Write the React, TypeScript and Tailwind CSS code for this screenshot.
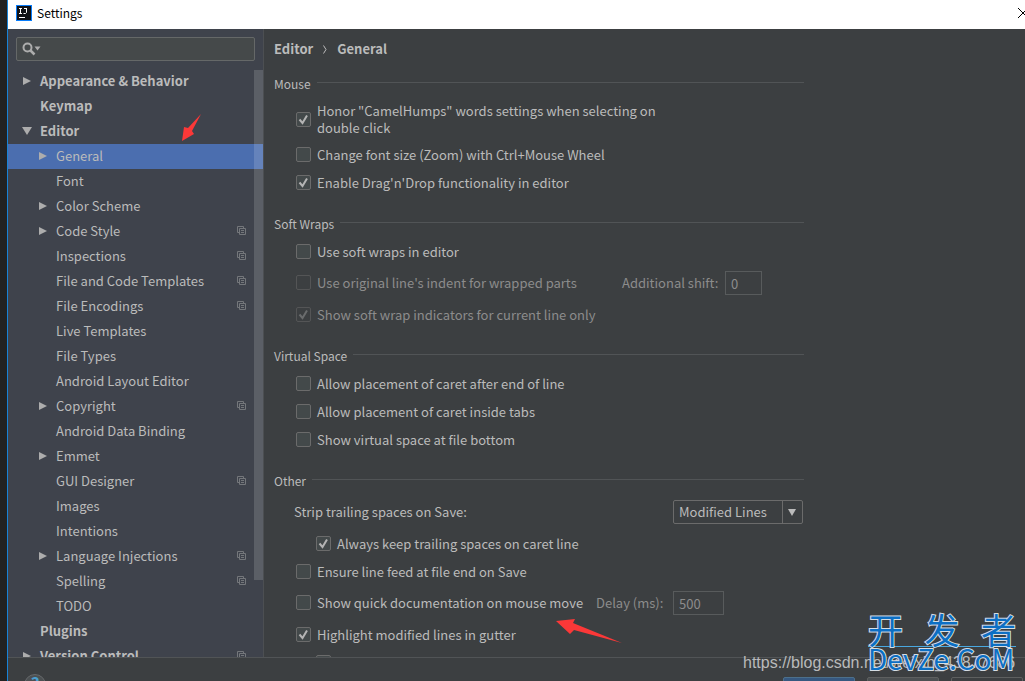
import type { ReactNode } from "react";

interface TreeItem {
  label: string;
  level?: number;
  state?: "open" | "closed";
  project?: boolean;
  selected?: boolean;
}

const tree: TreeItem[] = [
  { label: "Appearance & Behavior", level: 0, state: "closed" },
  { label: "Keymap", level: 0 },
  { label: "Editor", level: 0, state: "open" },
  { label: "General", state: "closed", selected: true },
  { label: "Font" },
  { label: "Color Scheme", state: "closed" },
  { label: "Code Style", state: "closed", project: true },
  { label: "Inspections", project: true },
  { label: "File and Code Templates", project: true },
  { label: "File Encodings", project: true },
  { label: "Live Templates" },
  { label: "File Types" },
  { label: "Android Layout Editor" },
  { label: "Copyright", state: "closed", project: true },
  { label: "Android Data Binding" },
  { label: "Emmet", state: "closed" },
  { label: "GUI Designer", project: true },
  { label: "Images" },
  { label: "Intentions" },
  { label: "Language Injections", state: "closed", project: true },
  { label: "Spelling", project: true },
  { label: "TODO" },
  { label: "Plugins", level: 0 },
  { label: "Version Control", level: 0, state: "closed", project: true },
];

function Triangle({ state }: { state?: "open" | "closed" }) {
  return (
    <svg className="h-[10px] w-[10px] shrink-0" viewBox="0 0 10 10" fill="#adadad">
      {state === "closed" && <path d="M1 1v8l8-4z" />}
      {state === "open" && <path d="M0 1h10l-5 8z" />}
    </svg>
  );
}

function ProjectIcon() {
  return (
    <svg
      className="h-[9px] w-[9px] shrink-0"
      viewBox="0 0 9 9"
      fill="none"
      stroke="#74777b"
    >
      <path d="M2 6.5H.5v-6h6V2M2.500 2.500h6v6h-6zM4 4.500h3M4 6.500h3" />
    </svg>
  );
}

function TreeRow({ item }: { item: TreeItem }) {
  const top = item.level === 0;
  return (
    <li>
      <button
        className={`flex h-[25px] w-full items-center pr-[17px] pb-[2px] text-left ${
          top ? "gap-2 pl-[14px] font-bold" : "gap-2 pl-[30px]"
        } ${item.selected ? "bg-[#4b6eaf]" : ""}`}
      >
        <Triangle state={item.state} />
        <span className="flex-1 whitespace-nowrap">{item.label}</span>
        {item.project && <ProjectIcon />}
      </button>
    </li>
  );
}

function Check({
  label,
  checked,
  disabled,
  className = "min-h-7 pl-[22px] pt-px",
}: {
  label: string;
  checked?: boolean;
  disabled?: boolean;
  className?: string;
}) {
  return (
    <label
      className={`flex items-center gap-[6px] ${className} ${
        disabled ? "text-[#8c8c8c]" : ""
      }`}
    >
      <span className="grid shrink-0">
        <input
          type="checkbox"
          defaultChecked={checked}
          disabled={disabled}
          className="peer col-start-1 row-start-1 h-[15px] w-[15px] appearance-none rounded-xs border border-[#6b6b6b] bg-[#43494a] disabled:border-[#545556] disabled:bg-[#3c3f41]"
        />
        <svg
          className="pointer-events-none invisible col-start-1 row-start-1 h-[15px] w-[15px] peer-checked:visible"
          viewBox="0 0 15 15"
          fill="none"
          stroke={disabled ? "#6a6c6d" : "#b4b4b4"}
          strokeWidth="2"
        >
          <path d="M3.500 7.500l3 3.500 4.500-7.500" />
        </svg>
      </span>
      <span>{label}</span>
    </label>
  );
}

function Section({ title, children }: { title: string; children: ReactNode }) {
  return (
    <section className="mb-[18px] max-w-[530px]">
      <div className="mb-[3px] flex h-5 gap-[6px]">
        <h2 className="text-[12px] leading-5">{title}</h2>
        <div className="mt-2 h-px flex-1 bg-[#515456]" />
      </div>
      {children}
    </section>
  );
}

function Sidebar() {
  return (
    <aside className="relative flex w-[256px] shrink-0 flex-col overflow-hidden border-r border-[#4c4f52] bg-[#3f434c]">
      <div className="m-2 flex h-6 shrink-0 items-center rounded-xs border border-[#656868] bg-[#45494a] pl-[5px]">
        <svg className="h-[14px] w-[19px] shrink-0" viewBox="0 0 19 14" fill="none">
          <circle cx="5.500" cy="5.500" r="4" stroke="#adadad" strokeWidth="2" />
          <path d="M8.500 8.500l4 4" stroke="#adadad" strokeWidth="2.500" />
          <path d="M12.500 4.500h6l-3 4z" fill="#adadad" />
        </svg>
        <input aria-label="Search settings" className="min-w-0 flex-1 bg-transparent outline-none" />
      </div>
      <ul>
        {tree.map((item) => (
          <TreeRow key={item.label} item={item} />
        ))}
      </ul>
      <div className="absolute top-[41px] right-0 h-[510px] w-[9px] bg-white/15" />
    </aside>
  );
}

function Content() {
  return (
    <main className="min-w-0 flex-1 overflow-hidden pt-[10px] pl-[10px]">
      <nav className="mb-[15px] flex h-5 items-center font-bold">
        <a href="#editor">Editor</a>
        <svg className="mx-[10px] h-[9px] w-1" viewBox="0 0 4 9" fill="none" stroke="#bbbbbb">
          <path d="M.5.5l2.500 4-2.500 4" />
        </svg>
        <a href="#general">General</a>
      </nav>

      <Section title="Mouse">
        <Check
          checked
          label={'Honor "CamelHumps" words settings when selecting on double click'}
          className="max-w-[390px] pt-[5px] pb-1 pl-[22px] leading-[17px]"
        />
        <Check label="Change font size (Zoom) with Ctrl+Mouse Wheel" />
        <Check checked label="Enable Drag'n'Drop functionality in editor" />
      </Section>

      <Section title="Soft Wraps">
        <Check label="Use soft wraps in editor" />
        <div className="flex h-[35px] items-center pl-[22px] text-[#8c8c8c]">
          <Check
            disabled
            label="Use original line's indent for wrapped parts"
            className="w-[326px]"
          />
          <label htmlFor="shift" className="w-[103px]">
            Additional shift:
          </label>
          <input
            id="shift"
            disabled
            defaultValue="0"
            className="mt-px h-6 w-[37px] border border-[#585b5c] px-[5px]"
          />
        </div>
        <Check checked disabled label="Show soft wrap indicators for current line only" />
      </Section>

      <Section title="Virtual Space">
        <Check label="Allow placement of caret after end of line" />
        <Check label="Allow placement of caret inside tabs" />
        <Check label="Show virtual space at file bottom" />
      </Section>

      <Section title="Other">
        <div className="flex h-[35px] items-center justify-between pr-px pl-5">
          <label htmlFor="strip">Strip trailing spaces on Save:</label>
          <div className="mt-px grid h-6 w-[130px] grid-cols-[1fr_20px] rounded-xs border border-[#6b6b6b]">
            <select
              id="strip"
              className="col-span-2 col-start-1 row-start-1 appearance-none pl-[5px] outline-none"
            >
              <option>Modified Lines</option>
              <option>All</option>
              <option>None</option>
            </select>
            <div className="pointer-events-none col-start-2 row-start-1 flex items-center justify-center border-l border-[#6b6b6b] pr-px">
              <svg className="h-[7px] w-2" viewBox="0 0 8 7" fill="#bbbbbb">
                <path d="M0 0h8L4 7z" />
              </svg>
            </div>
          </div>
        </div>
        <Check
          checked
          label="Always keep trailing spaces on caret line"
          className="min-h-7 pt-px pl-[42px]"
        />
        <Check label="Ensure line feed at file end on Save" />
        <div className="flex h-[35px] items-center pl-[22px]">
          <Check label="Show quick documentation on mouse move" className="w-[300px]" />
          <label htmlFor="delay" className="w-[77px] text-[#8c8c8c]">
            Delay (ms):
          </label>
          <input
            id="delay"
            disabled
            defaultValue="500"
            className="mt-px h-6 w-[51px] border border-[#585b5c] px-[5px] text-[#8c8c8c]"
          />
        </div>
        <Check checked label="Highlight modified lines in gutter" />
        <Check label="" className="min-h-7 pt-px pl-[42px]" />
      </Section>
    </main>
  );
}

function Footer() {
  return (
    <footer className="flex h-6 shrink-0 items-start justify-between overflow-hidden border-t border-[#515456] pr-[2px] pl-4">
      <button
        aria-label="Help"
        className="mt-4 flex h-[22px] w-[22px] shrink-0 justify-center rounded-full border border-[#66696b] bg-[#4c5052] text-[17px] leading-4 font-bold text-[#4a9fd0]"
      >
        ?
      </button>
      <div className="mt-[19px] flex gap-3">
        <button aria-label="OK" className="h-6 w-[72px] rounded-xs border border-[#4c708c] bg-[#365880]" />
        <button aria-label="Cancel" className="h-6 w-[72px] rounded-xs border border-[#5e6060] bg-[#4c5052]" />
        <button aria-label="Apply" className="h-6 w-[72px] rounded-xs border border-[#5e6060] bg-[#3c3f41]" />
      </div>
    </footer>
  );
}

function Annotations() {
  return (
    <div className="pointer-events-none absolute inset-0 overflow-hidden">
      <svg className="absolute top-[114px] left-[182px] h-[27px] w-[19px]" viewBox="0 0 19 27" fill="#fb3838">
        <path d="M0 27L2 13l4 1L19 0 10 17l2 3z" />
      </svg>
      <svg className="absolute top-[619px] left-[556px] h-[24px] w-[66px]" viewBox="0 0 66 24" fill="#fb3838">
        <path d="M0 2L19 0l-2 4 49 20-48-13-4 4z" />
      </svg>
      <div className="absolute top-[653px] left-[743px] font-['Liberation_Sans',sans-serif] text-[16px] leading-5 whitespace-nowrap text-[#b9babb]">
        https://blog.csdn.net/weixin_43877686
      </div>
      <div className="absolute top-[612px] left-[868px] w-[148px] font-['Noto_Sans_CJK_SC',sans-serif] text-[#0c6fc4] [-webkit-text-stroke:2px_#d5dde4] [paint-order:stroke_fill]">
        <div className="flex justify-between border-b border-[#4aa8e0] text-[35px] leading-[34px]">
          <span>开</span>
          <span>发</span>
          <span>者</span>
        </div>
        <div className="text-[28px] leading-[22px]">DevZe.CoM</div>
      </div>
    </div>
  );
}

export default function App() {
  return (
    <div className="relative flex h-screen overflow-hidden bg-[#222222] pl-[7px] font-['Noto_Sans_CJK_SC','Open_Sans',sans-serif] text-[13px] text-[#bbbbbb]">
      <div className="flex min-w-0 flex-1 flex-col border-l border-[#1883d7] bg-[#3c3f41]">
        <header className="flex h-[29px] shrink-0 items-center justify-between bg-white pl-2 text-black">
          <div className="flex items-center gap-[5px]">
            <svg className="mb-[3px] h-4 w-4" viewBox="0 0 16 16">
              <rect width="16" height="16" fill="#087cfa" />
              <rect x="1" y="1" width="14" height="14" fill="#101216" />
              <path
                d="M3 3.500h3M4.500 3.500v5M3 8.500h3M8 3.500h3M10.500 3.500v4l-1 1H7.500M3 12.500h6"
                fill="none"
                stroke="#fff"
              />
            </svg>
            <h1 className="pb-[3px] text-[12px]">Settings</h1>
          </div>
          <button aria-label="Close" className="mb-1">
            <svg className="h-[10px] w-[7px]" viewBox="0 0 7 10" fill="none" stroke="#000">
              <path d="M0 0l10 10M0 10L10 0" />
            </svg>
          </button>
        </header>
        <div className="flex min-h-0 flex-1">
          <Sidebar />
          <Content />
        </div>
        <Footer />
      </div>
      <Annotations />
    </div>
  );
}
